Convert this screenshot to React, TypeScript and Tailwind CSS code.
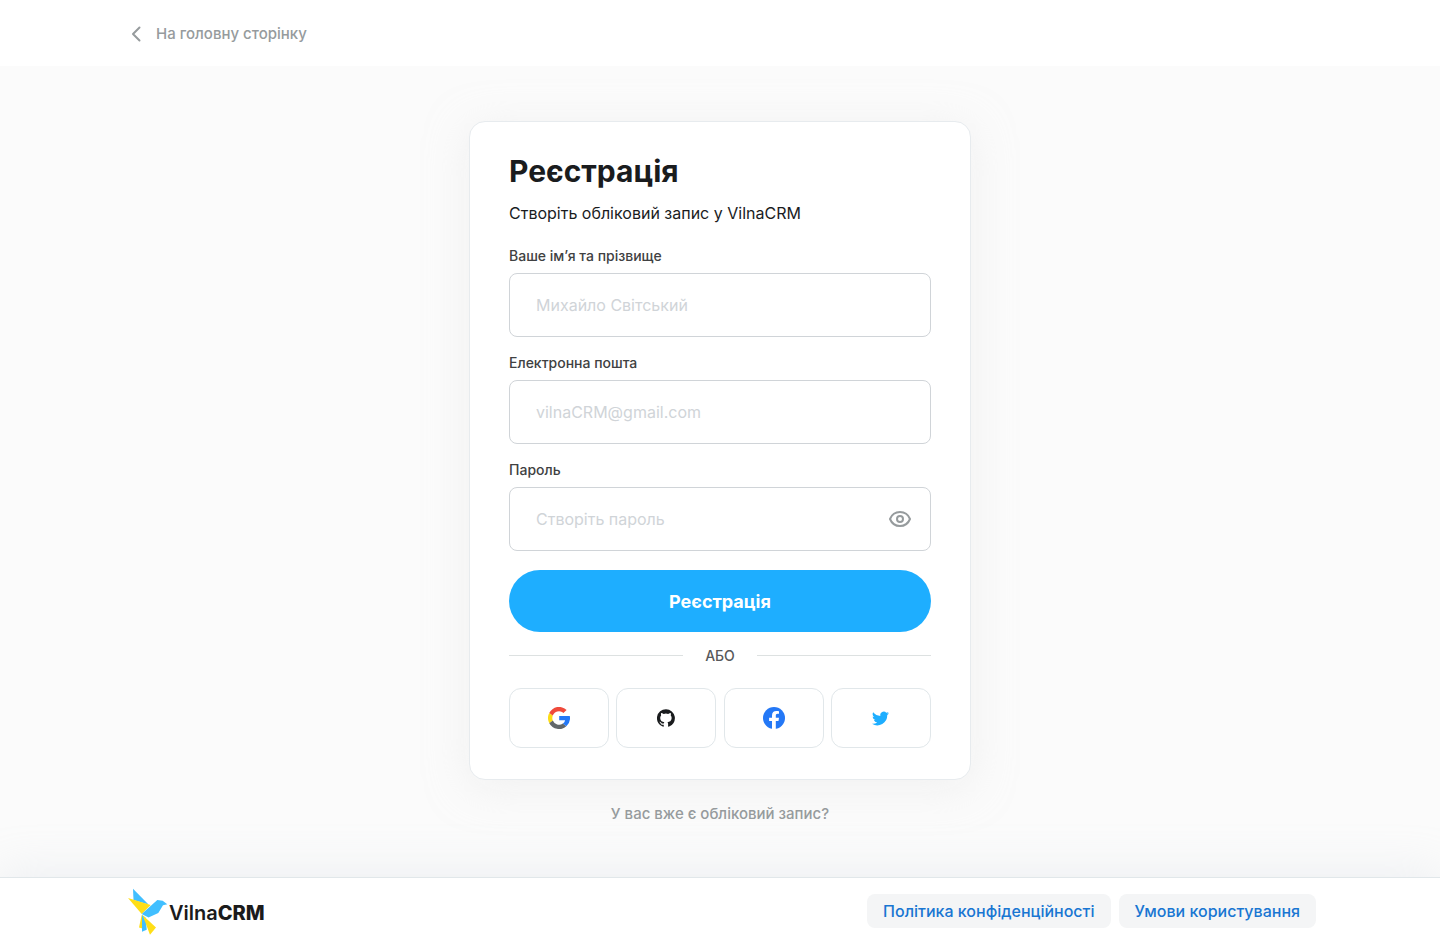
import type { ReactNode } from 'react';

function ChevronLeftIcon() {
  return (
    <svg width="24" height="24" viewBox="0 0 24 24" fill="none" aria-hidden="true">
      <path d="M15.500 5.500 9 12l6.500 6.500" stroke="#969b9d" strokeWidth="2" strokeLinecap="round" strokeLinejoin="round" />
    </svg>
  );
}

function EyeIcon() {
  return (
    <svg width="24" height="24" viewBox="0 0 24 24" fill="none" stroke="#969b9d" strokeWidth="2" aria-hidden="true">
      <path d="M2 12C3.800 7.600 7.600 5 12 5s8.200 2.600 10 7c-1.800 4.400-5.600 7-10 7S3.800 16.400 2 12Z" strokeLinejoin="round" />
      <circle cx="12" cy="12" r="3" />
    </svg>
  );
}

function GoogleIcon() {
  return (
    <svg width="22" height="22" viewBox="0 0 22 22" aria-hidden="true">
      <path fill="#ef4a3b" d="M1.200 6.100A11 11 0 0 1 18.600 2.900l-3.200 3A6.800 6.800 0 0 0 4.700 8.700Z" />
      <path fill="#fcdc14" d="M1.200 6.100 4.700 8.700a6.800 6.800 0 0 0 .1 4.800l-3.500 2.700a11 11 0 0 1-.1-10.100Z" />
      <path fill="#62676a" d="m1.300 16.200 3.500-2.700a6.800 6.800 0 0 0 10.100 3.100l3.400 2.700A11 11 0 0 1 1.300 16.200Z" />
      <path fill="#2478f6" d="M11.200 9h10.600a11 11 0 0 1-3.500 10.300l-3.400-2.700a5.200 5.200 0 0 0 2.200-3.300h-5.900Z" />
    </svg>
  );
}

function GithubIcon() {
  return (
    <svg width="18" height="18" viewBox="0 0 24 24" fill="#1a1c1e" aria-hidden="true">
      <path d="M12 .3a12 12 0 0 0-3.800 23.400c.6.1.8-.3.8-.6v-2.200c-3.300.7-4-1.400-4-1.400-.6-1.400-1.400-1.800-1.400-1.800-1-.7.1-.7.1-.7 1.200.1 1.900 1.200 1.900 1.200 1 1.800 2.800 1.300 3.500 1 .1-.8.4-1.300.7-1.600-2.700-.3-5.500-1.300-5.500-5.900 0-1.300.5-2.400 1.200-3.200-.1-.3-.5-1.500.1-3.200 0 0 1-.3 3.300 1.200a11.500 11.500 0 0 1 6 0c2.300-1.500 3.300-1.200 3.300-1.200.7 1.700.2 2.900.1 3.200.8.800 1.200 1.900 1.200 3.200 0 4.600-2.800 5.600-5.500 5.900.4.400.8 1.100.8 2.200v3.300c0 .3.200.7.800.6A12 12 0 0 0 12 .3Z" />
    </svg>
  );
}

function FacebookIcon() {
  return (
    <svg width="22" height="22" viewBox="0 0 22 22" aria-hidden="true">
      <circle cx="11" cy="11" r="11" fill="#2478f6" />
      <path fill="#fff" d="M9 22v-8H6.100v-3.200H9V8.400C9 5.500 10.700 4 13.300 4c.9 0 1.900.1 2.700.3v2.500h-1.400c-1.300 0-1.800.8-1.800 1.700v2.300h3.200l-.5 3.200h-2.700v8Z" />
    </svg>
  );
}

function TwitterIcon() {
  return (
    <svg width="17" height="17" viewBox="0 0 24 24" fill="#1eaeff" aria-hidden="true">
      <path d="M24 4.600a10 10 0 0 1-2.800.8 5 5 0 0 0 2.100-2.700c-1 .6-2 1-3.100 1.200a4.900 4.900 0 0 0-8.400 4.500A14 14 0 0 1 1.700 3.200a4.900 4.900 0 0 0 1.500 6.500 5 5 0 0 1-2.200-.6v.1a4.900 4.900 0 0 0 3.900 4.800 5 5 0 0 1-2.200.1 4.900 4.900 0 0 0 4.600 3.400A9.900 9.900 0 0 1 0 19.500 14 14 0 0 0 21.500 7.100 10 10 0 0 0 24 4.600Z" />
    </svg>
  );
}

function BirdLogo() {
  return (
    <svg width="40" height="48" viewBox="0 0 40 48" aria-hidden="true">
      <path fill="#ffde17" d="M13.700 28 11 40.500l3.500 1 2-11Z" />
      <path fill="#41bfff" d="M14 28v16.700l4.700-2-1-12Z" />
      <path fill="#ffde17" d="m14.500 28 13.500 12.500-6 7.200Z" />
      <path fill="#41bfff" d="M5 1.700 20.500 17.500 5.500 13Z" />
      <path fill="#ffde17" d="m0 11 22.700 7-9 9Z" />
      <path fill="#41bfff" d="M13.700 27 29.300 13l5.400.7 4.600 3.600-4.300.9-4.700 7.800-9.800 4.500Z" />
    </svg>
  );
}

function Field({ id, label, type, placeholder, children }: { id: string; label: string; type: string; placeholder: string; children?: ReactNode }) {
  return (
    <div>
      <label htmlFor={id} className="block text-sm leading-[18px] font-medium text-[#404142]">{label}</label>
      <div className="mt-2 flex h-16 items-center rounded-lg border border-[#d0d4d8] bg-white pr-[18px] pl-[26px]">
        <input id={id} type={type} placeholder={placeholder} className="h-full min-w-0 flex-1 bg-transparent text-base text-[#1a1c1e] outline-none placeholder:text-[#d0d4d8]" />
        {children}
      </div>
    </div>
  );
}

const providers = [
  { name: 'Google', icon: <GoogleIcon /> },
  { name: 'GitHub', icon: <GithubIcon /> },
  { name: 'Facebook', icon: <FacebookIcon /> },
  { name: 'Twitter', icon: <TwitterIcon /> },
];

export default function App() {
  return (
    <div className="flex min-h-screen flex-col bg-[#fbfbfb] font-['Inter','Noto_Sans',sans-serif] text-[#1a1c1e]">
      <header className="bg-white px-5 pt-[2px]">
        <div className="mx-auto flex h-16 max-w-[1192px] items-center">
          <a href="#home" className="flex items-center gap-2 text-[15px] leading-[18px] font-medium text-[#969b9d]">
            <ChevronLeftIcon />
            На головну сторінку
          </a>
        </div>
      </header>

      <main className="flex flex-1 flex-col items-center px-4 pt-[55px] pb-12">
        <section className="w-full max-w-[502px] rounded-2xl border border-[#e7ebee] bg-white px-[39px] pt-[31px] pb-[31px] shadow-[0_7px_40px_rgba(231,231,231,0.5)]">
          <h1 className="text-3xl leading-9 font-bold">Реєстрація</h1>
          <p className="mt-3 text-base leading-6">Створіть обліковий запис у VilnaCRM</p>
          <form className="mt-[22px]" onSubmit={(event) => event.preventDefault()}>
            <div className="flex flex-col gap-[17px]">
              <Field id="fullName" label="Ваше ім’я та прізвище" type="text" placeholder="Михайло Світський" />
              <Field id="email" label="Електронна пошта" type="email" placeholder="vilnaCRM@gmail.com" />
              <Field id="password" label="Пароль" type="password" placeholder="Створіть пароль">
                <button type="button" aria-label="Показати пароль"><EyeIcon /></button>
              </Field>
            </div>
            <button type="submit" className="mt-[19px] h-[62px] w-full rounded-full bg-[#1eaeff] pt-[2px] text-lg font-bold text-white">Реєстрація</button>
          </form>
          <div className="mt-[15px] flex items-center gap-[22px] text-sm leading-[18px] font-medium text-[#57595b]">
            <span className="h-[2px] flex-1 border-t border-[#dde1e1]" />
            АБО
            <span className="h-[2px] flex-1 border-t border-[#dde1e1]" />
          </div>
          <div className="mt-[23px] flex justify-between gap-1">
            {providers.map(({ name, icon }) => (
              <button key={name} type="button" aria-label={name} className="flex h-[60px] w-[100px] items-center justify-center rounded-xl border border-[#e1e7ea] bg-white">{icon}</button>
            ))}
          </div>
        </section>
        <a href="#login" className="mt-[25px] text-[15px] leading-[18px] font-medium text-[#969b9d]">У вас вже є обліковий запис?</a>
      </main>

      <footer className="border-t border-[#e1e7ea] bg-white px-5 pt-[2px] shadow-[0_-5px_46px_rgba(198,209,220,0.25)]">
        <div className="mx-auto flex h-[62px] max-w-[1192px] items-center justify-between">
          <a href="#home" className="ml-1 flex items-center gap-px text-xl leading-6 text-[#1b1b1b]">
            <BirdLogo />
            <span className="pt-1 font-semibold">Vilna<span className="font-extrabold">CRM</span></span>
          </a>
          <nav className="flex gap-2 text-base leading-[18px] font-medium text-[#1976d2]">
            <a href="#privacy" className="rounded-lg bg-[#f4f5f6] px-4 py-2">Політика конфіденційності</a>
            <a href="#terms" className="rounded-lg bg-[#f4f5f6] px-4 py-2">Умови користування</a>
          </nav>
        </div>
      </footer>
    </div>
  );
}
